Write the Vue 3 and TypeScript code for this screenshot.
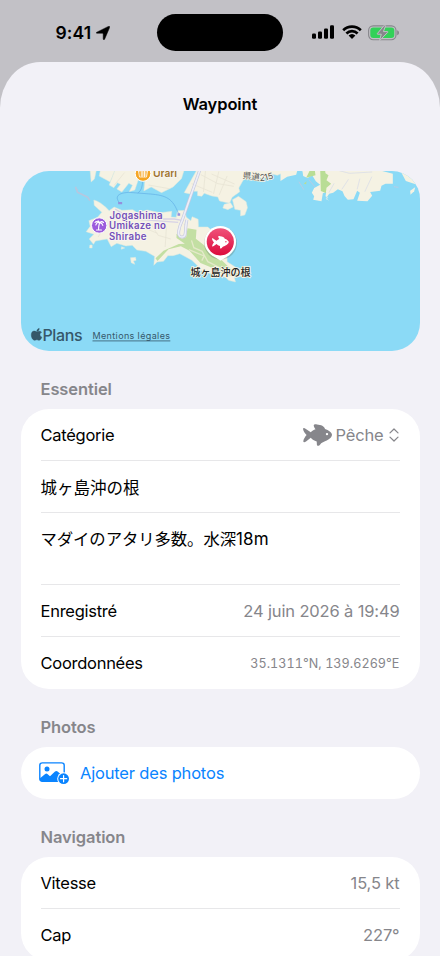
<script setup lang="ts">
interface Reading {
  label: string
  value: string
}

const readings: Reading[] = [
  { label: 'Vitesse', value: '15,5 kt' },
  { label: 'Cap', value: '227°' },
]
const fishPath =
  'M0 4.7C.3 3.8 1.5 4 2.5 4.7L7.8 8.2C9 7 10.7 5.8 12.5 5.2C11.3 3.7 10.5 2.2 10.8 1.1C11.1.1 12.5.2 14 .4C18 .7 21.5 2 22 5C25.5 6 29 8.7 29 10.7C29 13 26 15.6 22.5 17C20.5 18.2 18.3 18.6 17.2 20.4C16.3 22 14 22.2 13.9 20.7L13.7 17.4C11.2 16.7 9.2 15.4 7.8 13.8L3 17.6C1.5 18.6.2 18.5.3 17.2C.5 15.2 2.2 12.7 3.6 11.1C2.2 9.7.1 6.7 0 4.7ZM24 8.9A1.2 1.2 0 1 0 24 11.3A1.2 1.2 0 1 0 24 8.9Z'
</script>

<template>
  <div class="screen">
    <header class="status">
      <div class="clock">
        <span>9:41</span>
        <svg width="14" height="14" viewBox="0 0 14 14"><path d="M.8 6.2 12.4.4C13.3 0 14 .7 13.6 1.6L8.6 13.2C8.2 14 7.2 13.8 7.2 13V7.9Q7.2 7.2 6.5 7.2H1C.1 7.2 0 6.6.8 6.2Z" stroke="#000" stroke-width=".5" stroke-linejoin="round" /></svg>
      </div>
      <div class="island"></div>
      <div class="indicators">
        <svg width="22" height="14" viewBox="0 0 22 14">
          <rect x="0" y="8.6" width="4" height="5.1" rx="1.2" />
          <rect x="6" y="6.4" width="4" height="7.3" rx="1.2" />
          <rect x="12" y="3.4" width="4" height="10.3" rx="1.2" />
          <rect x="18" y="0.3" width="4" height="13.4" rx="1.2" />
        </svg>
        <svg class="wifi" width="20" height="14" viewBox="0 0 20 14">
          <path d="M1.2 5.2A12.6 12.6 0 0 1 18.8 5.2M4.4 8.4A8.1 8.1 0 0 1 15.6 8.4" fill="none" stroke="#000" stroke-width="2.7" />
          <path d="M6.6 10.5A5 5 0 0 1 13.4 10.5L10.5 13.5Q10 14 9.5 13.5Z" />
        </svg>
        <svg class="battery" width="32" height="16" viewBox="0 0 32 16">
          <rect x=".6" y=".9" width="27.4" height="13.8" rx="4.6" fill="none" stroke="#86868b" stroke-width="1.1" />
          <path d="M29.2 5.3C31.6 6 31.6 9.6 29.2 10.3Z" fill="#86868b" />
          <rect x="2.3" y="2.6" width="24" height="10.4" rx="3" fill="#32d158" />
          <path d="M16.4.2 9.3 8.6Q8.9 9.2 9.7 9.2H13.3L11.5 15.6 19.8 7.3Q20.2 6.6 19.4 6.6H15.4L17.6.8Z" fill="#86868b" stroke="#c2c1c6" stroke-width="1" />
        </svg>
      </div>
    </header>

    <main class="sheet">
      <h1>Waypoint</h1>

      <svg class="map" viewBox="20.5 171 399 180">
        <rect x="20" y="171" width="400" height="180" fill="#8bdaf6" />
        <g transform="translate(75 168) scale(.33333)">
          <g fill="#f5f2e3" stroke="#d9e8df" stroke-width="1.5">
            <path d="M43 0 47 42 57 33 64 0ZM76 0 71 24 104 42 122 0Z" />
            <path d="M119 5 101 51 115 59 126 44 135 49 124 63 139 72 160 46 171 52 161 71 178 66 188 37 208 38 205 69 227 57 258 74 293 57 318 32 328 0H119Z" />
            <path d="M367 0 326 74 348 79 351 70 366 70 366 83 379 85 386 76 409 84 427 87 432 99 462 106 470 88 493 71 490 60 503 37 519 26 544 25 563 34 588 18 606 22 632 10 660 7V0Z" />
            <path d="M446 109 465 104 473 117 457 125 442 120ZM471 95 489 85 512 101 516 119 508 141 495 144 495 127 478 124Z" />
            <path d="M55 96Q75 100 101 128L116 117 139 127 172 125 185 134 215 126 254 134 289 130 287 147 302 148 306 128 329 127 332 147 346 158 350 146 368 154 369 177 397 177 410 188 427 190 454 245 455 281 484 300 504 307 503 323 477 329 480 342 459 337 452 329 422 319 406 317 379 310 366 293 349 277 313 257 293 263 277 263 264 280 245 282 235 292 237 265 211 250 184 246 170 232 151 234 124 226 107 236 95 213 60 219 54 229 41 213 55 199 32 191 44 175 40 158 66 148 79 133 56 112Z" />
            <path d="M43 231H50V240H42ZM138 236 148 240 137 244ZM165 269 180 268 182 277 174 279 178 289 167 284Z" />
          </g>
          <path d="M0 56 6 73 37 88 43 98M6 67 0 61" fill="none" stroke="#b6c7df" stroke-width="5" stroke-linejoin="round" />
          <path d="M303 197 319 212 332 207 336 181 363 185 361 212 384 230 406 259 434 272 470 307 493 319 476 326 423 311 404 297 375 285 342 248 316 235 279 244 246 279 240 271 264 248 310 228 328 227 303 210Z" fill="#c3dfa3" />
          <path d="M348 217 355 239 380 250 397 281 435 300M340 245 386 264 379 278" fill="none" stroke="#e4e9c9" stroke-width="4" />
          <g fill="none" stroke="#e8e4d5" stroke-width="2.5">
            <path d="M147 14 116 52M219 51 281 62M256 8 309 30M376 20 427 47 475 55M390 8 384 72M408 18 477 48M430 10 414 78M455 24 431 81M348 47 410 73M116 149 78 191 68 207M162 171 207 180 246 196M229 172 248 202 286 213M273 174 269 237M338 158 325 171" />
          </g>
          <path d="M119 123 146 140 202 142 242 153 296 153 324 158M143 151 239 158 308 163" fill="none" stroke="#d7d2e6" stroke-width="4" />
          <path d="M375 0 320 157C312 175 301 207 319 207C335 209 327 183 334 156" fill="none" stroke="#c7c9df" stroke-width="9" />
          <path d="M375 0 320 157C312 175 301 207 319 207C335 209 327 183 334 156" fill="none" stroke="#edeef8" stroke-width="5" />
          <path d="M133 106C116 85 128 75 160 73L224 78C272 82 292 91 309 137M187 75Q202 67 201 35" fill="none" stroke="#61aee5" stroke-width="2" />
          <path d="M128 102H140V109H128ZM306 136H314V143H306Z" fill="#958fdc" />
        </g>
        <g transform="translate(280 165) scale(.33333)">
          <path d="M0 10V48L20 35 47 29 51 15 66 19 68 33 81 39 95 31 106 49 119 59 101 69 94 83 101 94 98 104 123 109 127 85 137 81 135 94 144 99 135 101 146 107 137 100 146 86 158 83 172 73 186 79 192 93 202 104 219 103 230 77 238 83 230 107 261 109 275 92 269 81 299 77 303 62 315 56H337V26L305 18H360L376 48 403 57 415 49 435 85V0Z" fill="#f5f2e3" />
          <path d="M91 10 77 38 105 31 102 10ZM119 10 121 78 136 84 138 68 152 56 138 46 144 31 135 25 133 10ZM70 56 78 49 77 58Z" fill="#b9dd95" />
          <path d="M389 77 404 67 401 79 390 89Z" fill="#f5f2e3" />
          <path d="M176 17 207 25 275 21M204 43 184 73M238 41 230 73M274 35 253 80M145 83 161 55" stroke="#d4dae8" fill="none" stroke-width="2" />
          <path d="M55 50 70 74M85 44 103 65M340 65 354 67" stroke="#b8cce4" stroke-width="3" />
        </g>

        <circle cx="142.5" cy="173.5" r="7.8" fill="#f5a623" stroke="#fff" />
        <path d="M138 171H147L146 177H139ZM140 171 142 168M145 171 143 168M140 173H146M140 175H146M141.5 171V177M144 171V177" fill="none" stroke="#fff" stroke-width=".8" />
        <text x="152.5" y="177.4" class="poi urari" textLength="24">Urari</text>
        <circle cx="98.7" cy="225.5" r="7.7" fill="#9c5cdd" stroke="#fff" stroke-width="1" />
        <path d="M99 223Q98 226 98 230M99 223Q97 221 95.3 225M99 223Q96 220.5 94.5 222.5M99 223Q98.5 221 97.5 220.8M99 223Q101 220.5 103 222.5M99 223Q101.5 222.5 102.3 225.4M96 230H101" fill="none" stroke="#fff" stroke-width="1.1" stroke-linecap="round" />
        <g class="poi jogashima">
          <text x="109" y="218.7" textLength="53">Jogashima</text>
          <text x="108.5" y="229.2" textLength="57">Umikaze no</text>
          <text x="108.5" y="239.8" textLength="37.5">Shirabe</text>
        </g>
        <text x="242" y="178.2" class="road" transform="rotate(7 242 178)">県道</text>
        <text x="259.2" y="180.6" class="road">2</text>
        <text x="264.8" y="180.6" class="road" transform="rotate(-16 264.8 180.6)">15</text>

        <circle cx="220" cy="243" r="16.5" class="pin-shadow" />
        <path d="M210 254.5 219 260Q220 261 221 260L230 254.5Z" fill="#fff" />
        <circle cx="219.8" cy="241.8" r="15.8" fill="#fff" />
        <circle cx="219.8" cy="241.8" r="13.6" fill="url(#pin)" />
        <path :d="fishPath" transform="translate(211.5 235.9) scale(.58)" fill="#fff" />
        <text x="190" y="276.4" class="place" textLength="60">城ヶ島沖の根</text>

        <g class="attribution">
          <path d="M38.7 328.4C37.3 328.7 36.3 329.8 36.4 331.1C37.8 331 38.8 329.9 38.7 328.4ZM36.3 331.8C35.5 331.8 34.7 331.1 33.6 331.1C32 331.1 30.8 332.6 30.8 334.9C30.8 337.5 32.4 340.2 34.1 340.2C35 340.2 35.3 339.7 36.3 339.7C37.3 339.7 37.6 340.2 38.6 340.2C40 340.2 41 338.1 41.3 337.2C38.8 336.2 38.9 333.1 41 332.3C39.9 330.6 37.5 331.3 36.3 331.8Z" stroke="#35576a" stroke-width=".5" />
          <text x="42" y="340.7" class="plans" textLength="40">Plans</text>
          <text x="92" y="339.4" class="legal" textLength="77.5">Mentions légales</text>
          <path d="M92 340.9H169.8" stroke="#35576a" stroke-width=".8" />
        </g>
        <defs>
          <linearGradient id="pin" x1="0" y1="0" x2="0" y2="1"><stop stop-color="#f0527a" /><stop offset="1" stop-color="#dc0c3d" /></linearGradient>
        </defs>
      </svg>

      <h2>Essentiel</h2>
      <section class="card">
        <div class="row">
          <span>Catégorie</span>
          <div class="value picker">
            <svg width="29" height="22" viewBox="0 0 29 22"><path :d="fishPath" fill="#86868b" fill-rule="evenodd" /></svg>
            <span>Pêche</span>
            <svg class="chevrons" width="10" height="14" viewBox="0 0 10 14"><path d="M1 4.9 5 1 9 4.9M1 9.1 5 13 9 9.1" fill="none" stroke="#86868b" stroke-width="1.25" stroke-linecap="round" stroke-linejoin="round" /></svg>
          </div>
        </div>
        <div class="row name"><span class="jp">城ヶ島沖の根</span></div>
        <div class="row note"><span class="jp">マダイのアタリ多数。水深<span class="depth">18m</span></span></div>
        <div class="row"><span>Enregistré</span><span class="value date">24 juin 2026 à 19:49</span></div>
        <div class="row"><span>Coordonnées</span><span class="value coords">35.1311°N, 139.6269°E</span></div>
      </section>

      <h2>Photos</h2>
      <section class="card">
        <div class="row action">
          <svg width="31" height="23" viewBox="0 0 31 23">
            <rect x=".8" y=".9" width="24.4" height="18.4" rx="2.4" fill="none" stroke="#0a84ff" stroke-width="1.4" />
            <circle cx="8" cy="7" r="2.5" fill="#0a84ff" />
            <path d="M1 16.2 6.2 12Q7.3 11.2 8.4 12L11 14.2 16 9.5Q17.3 8.3 18.6 9.5L25 15V19.3H2.5Q1 19.3 1 17.8Z" fill="#0a84ff" />
            <circle cx="24.6" cy="16.7" r="6.4" fill="#fff" />
            <circle cx="24.6" cy="16.7" r="5.4" fill="#0a84ff" />
            <path d="M24.6 13.6V19.8M21.5 16.7H27.7" stroke="#fff" stroke-width="1.2" stroke-linecap="round" />
          </svg>
          <span>Ajouter des photos</span>
        </div>
      </section>

      <h2>Navigation</h2>
      <section class="card">
        <div v-for="item in readings" :key="item.label" class="row">
          <span>{{ item.label }}</span><span class="value">{{ item.value }}</span>
        </div>
      </section>
    </main>
  </div>
</template>

<style>
body { margin: 0; background: #c2c1c6; overflow: hidden; }
</style>

<style scoped>
* { box-sizing: border-box; }
.screen {
  width: 440px; height: 956px; overflow: hidden; background: #c2c1c6;
  font-family: Inter, "Noto Sans CJK JP", sans-serif; font-size: 16.5px; color: #000;
}
.status { display: flex; height: 62px; align-items: flex-start; }
.clock { display: flex; width: 157px; padding: 22px 0 0 55.5px; align-items: center; gap: 5px; font-size: 17.5px; font-weight: 600; line-height: 22px; letter-spacing: .1px; }
.island { width: 126px; height: 37px; margin-top: 14px; border-radius: 19px; background: #000; }
.indicators { display: flex; padding: 25px 0 0 29px; }
.wifi { margin-left: 7.5px; }
.battery { margin-left: 6.5px; }
.sheet { height: 894px; padding: 0 20.5px; border-radius: 40px 40px 0 0 / 46px 46px 0 0; background: #f2f1f7; }
h1 { margin: 0; height: 109px; padding-top: 31px; text-align: center; font-size: 16.5px; font-weight: 600; line-height: 22px; letter-spacing: -.1px; }
.map { display: block; width: 399px; height: 180px; border-radius: 28px; }
h2 { margin: 0; height: 58px; padding: 27px 20px 0; color: #86868b; font-size: 16.5px; font-weight: 600; line-height: 22px; letter-spacing: -.1px; }
.card { border-radius: 28px; background: #fff; padding: 0 20px; }
.row { display: flex; height: 52px; align-items: center; justify-content: space-between; line-height: 22px; border-bottom: 1px solid #e7e7e9; padding-top: 1px; letter-spacing: -.27px; }
.row:last-child { border-bottom-color: transparent; }
.name { padding-top: 3px; }
.note { height: 72px; align-items: flex-start; padding-top: 15px; }
.jp { font-size: 16.5px; letter-spacing: 0; }
.note .jp { font-size: 16.4px; letter-spacing: -.1px; }
.depth { font-size: 17px; letter-spacing: .2px; }
.value { color: #86868b; letter-spacing: -.15px; }
.picker { display: flex; align-items: center; gap: 3px; }
.chevrons { margin: 0 1px 0 2px; }
.coords { font-size: 12.6px; font-variant-numeric: tabular-nums; letter-spacing: .05px; padding-top: 2px; }
.action { justify-content: flex-start; gap: 10px; color: #0a84ff; margin-left: -1.5px; letter-spacing: -.18px; }
.poi { font-size: 10.5px; font-weight: 600; paint-order: stroke; stroke: #f8f4ef; stroke-width: 2px; stroke-linejoin: round; }
.urari { fill: #a0742e; }
.jogashima { font-size: 9.7px; fill: #7350b9; }
.road { font-size: 8.6px; fill: #555; paint-order: stroke; stroke: #f5f2e3; stroke-width: 1.5px; }
.place { font-size: 10px; font-weight: 500; fill: #222; paint-order: stroke; stroke: #f5f2e3; stroke-width: 1.8px; }
.pin-shadow { fill: #59755c; opacity: .3; }
.attribution { fill: #35576a; }
.plans { font-size: 16px; font-weight: 500; }
.legal { font-size: 9px; }
</style>
